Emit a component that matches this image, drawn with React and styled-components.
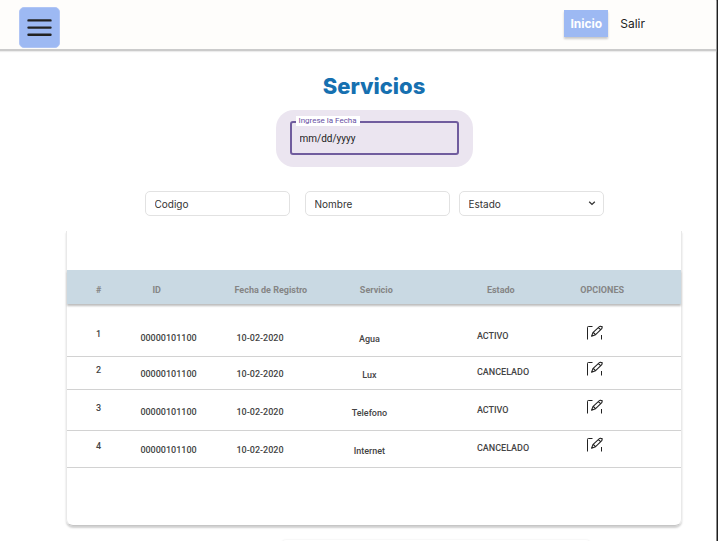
import React from "react";
import styled, { createGlobalStyle } from "styled-components";

const GlobalStyle = createGlobalStyle`
  *, *::before, *::after { box-sizing: border-box; }
  body { margin: 0; background: #fff; font-family: Roboto, "Liberation Sans", sans-serif; color: #333; }
  button, input, select { font: inherit; color: inherit; }
`;

const Page = styled.div`
  display: flex;
  flex-direction: column;
  min-height: 100vh;
  padding-right: 1px;
  border-right: 1px solid #1f1f1f;
  box-shadow: inset -1px 0 0 #8a8a8a;
  overflow: hidden;
`;

const Header = styled.header`
  display: flex;
  align-items: center;
  justify-content: space-between;
  height: 51px;
  padding: 6px 71px 0 19px;
  background: #fefdfb;
  border-bottom: 2px solid #cbcbcb;
  box-shadow: 0 1px 1px #ececec;
`;

const MenuButton = styled.button`
  display: grid;
  place-items: center;
  width: 41px;
  height: 41px;
  padding: 0;
  border: 1px solid #b0c5f5;
  border-radius: 5px;
  background: #9db9f3;
  cursor: pointer;
`;

const Nav = styled.nav`
  display: flex;
  align-items: center;
  gap: 12px;
  height: 41px;
  padding-bottom: 8px;
`;

const NavLink = styled.a`
  display: flex;
  align-items: center;
  justify-content: center;
  height: 27px;
  padding: 0 ${(p) => (p.$active ? 6 : 0)}px;
  font-size: 12px;
  font-family: Inter, sans-serif;
  font-weight: ${(p) => (p.$active ? 700 : 400)};
  color: ${(p) => (p.$active ? "#fff" : "#222")};
  background: ${(p) => (p.$active ? "#9db9f3" : "transparent")};
  box-shadow: ${(p) => (p.$active ? "0 2px 2px #c9c9c9" : "none")};
  text-decoration: none;
`;

const Main = styled.main`
  display: flex;
  flex-direction: column;
  align-items: center;
  padding: 20px 34px 0 66px;
`;

const Title = styled.h1`
  margin: 0;
  font-family: Inter, sans-serif;
  font-size: 22px;
  line-height: 30px;
  font-weight: 800;
  color: #1670b0;
`;

const DatePanel = styled.div`
  width: 197px;
  margin-top: 9px;
  padding: 11px 14px 12px;
  border-radius: 18px;
  background: #ebe5f0;
`;

const DateField = styled.div`
  position: relative;
`;

const DateLabel = styled.label`
  position: absolute;
  top: -5px;
  left: 6px;
  padding: 0 3px;
  font-size: 8px;
  line-height: 10px;
  color: #6750a4;
  background: #fff;
`;

const DateInput = styled.input`
  display: block;
  width: 100%;
  height: 34px;
  padding: 0 8px;
  border: 2px solid #705c9e;
  border-radius: 3px;
  background: transparent;
  font-size: 10px;
  color: #222;
  outline: none;
  &::placeholder { color: #222; opacity: 1; }
`;

const Filters = styled.form`
  display: flex;
  gap: 9px;
  margin-top: 24px;
`;

const FilterPair = styled.div`
  display: flex;
  gap: 15px;
`;

const filterBox = `
  width: 145px;
  height: 25px;
  padding: 0 9px;
  border: 1px solid #e2e2e2;
  border-radius: 5px;
  background: #fff;
  font-family: Inter, sans-serif;
  font-size: 10px;
  color: #333;
`;

const FilterInput = styled.input`
  ${filterBox}
  &::placeholder { color: #333; opacity: 1; }
`;

const SelectWrap = styled.div`
  position: relative;
`;

const FilterSelect = styled.select`
  ${filterBox}
  display: block;
  appearance: none;
`;

const SelectArrow = styled.svg`
  position: absolute;
  right: 8px;
  top: 8px;
  pointer-events: none;
`;

const Card = styled.section`
  width: 100%;
  margin-top: 15px;
  padding: 39px 0 57px;
  border: 1px solid #e9e9e9;
  border-top: 0;
  border-bottom-color: #c6c6c6;
  border-radius: 0 0 7px 7px;
  box-shadow: 0 2px 2px #d0d0d0;
`;

const Table = styled.table`
  width: 100%;
  table-layout: fixed;
  border-collapse: separate;
  border-spacing: 0;
  font-size: 9px;
  line-height: 12px;
`;

const Col = styled.col`
  width: ${(p) => p.$share}%;
`;

const Head = styled.thead`
  background: #c9d9e3;
  box-shadow: 0 2px 2px #bdbdbd;
`;

const HeadCell = styled.th`
  height: 34px;
  padding: 5px 0 0 ${(p) => p.$inset}px;
  text-align: left;
  font-weight: 700;
  color: #858585;
  white-space: nowrap;
`;

const Row = styled.tr`
  height: ${(p) => p.$height}px;
`;

const Cell = styled.td`
  padding: ${(p) => p.$top || 0}px ${(p) => p.$right || 0}px ${(p) => p.$bottom || 0}px ${(p) => p.$inset || 0}px;
  border-bottom: 1px solid #d2d2d2;
  text-align: ${(p) => p.$align || "left"};
  font-weight: 500;
  color: #444;
`;

const EditButton = styled.button`
  display: block;
  padding: 0;
  border: 0;
  background: none;
  cursor: pointer;
`;

const NextPanel = styled.div`
  width: 50%;
  height: 8px;
  margin-top: 14px;
  margin-left: 20%;
  border-radius: 8px;
  box-shadow: 0 0 2px #e4e4e4;
`;

const MenuIcon = () => (
  <svg width="25" height="19" viewBox="0 0 25 19" stroke="#222" strokeWidth="2.4" strokeLinecap="round" aria-hidden="true">
    <path d="M1.5 2.4h22M1.5 9.6h22M1.5 16.7h22" />
  </svg>
);

const EditIcon = () => (
  <svg width="18" height="16" viewBox="0 0 18 16" fill="none" stroke="#222" aria-hidden="true">
    <path d="M6.5 1.5H2.3Q1.5 1.5 1.5 2.3V14.5" strokeWidth="1" />
    <path d="M15.5 10V14.5" strokeWidth="1" />
    <path d="M5.6 11.3l1.3-3.7 6.2-5.8q.8-.7 1.8-.4l1.4.3-.5 1.9-6.2 6.1zM7.4 7.5l2 2.1M12.3 2.5l2.3 2.1" strokeWidth="1.1" strokeLinejoin="round" />
  </svg>
);

const shares = [10, 15, 17, 22, 17, 19];

const headings = [
  { text: "#", inset: 29 },
  { text: "ID", inset: 24 },
  { text: "Fecha de Registro", inset: 14 },
  { text: "Servicio", inset: 35 },
  { text: "Estado", inset: 27 },
  { text: "OPCIONES", inset: 16 },
];

const services = [
  { n: 1, id: "00000101100", date: "10-02-2020", name: "Agua", state: "ACTIVO", height: 53, top: 14 },
  { n: 2, id: "00000101100", date: "10-02-2020", name: "Lux", state: "CANCELADO", height: 33, top: 0 },
  { n: 3, id: "00000101100", date: "10-02-2020", name: "Telefono", state: "ACTIVO", height: 41, top: 2 },
  { n: 4, id: "00000101100", date: "10-02-2020", name: "Internet", state: "CANCELADO", height: 37, top: 0 },
];

export default function App() {
  return (
    <>
      <GlobalStyle />
      <Page>
        <Header>
          <MenuButton type="button" aria-label="Menú">
            <MenuIcon />
          </MenuButton>
          <Nav>
            <NavLink href="#inicio" $active>Inicio</NavLink>
            <NavLink href="#salir">Salir</NavLink>
          </Nav>
        </Header>
        <Main>
          <Title>Servicios</Title>
          <DatePanel>
            <DateField>
              <DateInput id="fecha" type="text" placeholder="mm/dd/yyyy" />
              <DateLabel htmlFor="fecha">Ingrese la Fecha</DateLabel>
            </DateField>
          </DatePanel>
          <Filters>
            <FilterPair>
              <FilterInput type="text" placeholder="Codigo" aria-label="Codigo" />
              <FilterInput type="text" placeholder="Nombre" aria-label="Nombre" />
            </FilterPair>
            <SelectWrap>
              <FilterSelect aria-label="Estado">
                <option>Estado</option>
                <option>ACTIVO</option>
                <option>CANCELADO</option>
              </FilterSelect>
              <SelectArrow width="8" height="8" viewBox="0 0 8 8" fill="none" stroke="#333" strokeWidth="1.3">
                <path d="M1.2 2.7L4 5.4l2.8-2.7" />
              </SelectArrow>
            </SelectWrap>
          </Filters>
          <Card>
            <Table>
              <colgroup>
                {shares.map((share, i) => <Col key={i} $share={share} />)}
              </colgroup>
              <Head>
                <tr>
                  {headings.map((h) => (
                    <HeadCell key={h.text} scope="col" $inset={h.inset}>{h.text}</HeadCell>
                  ))}
                </tr>
              </Head>
              <tbody>
                {services.map((s) => (
                  <Row key={s.n} $height={s.height}>
                    <Cell $inset={29} $top={s.top} $bottom={6}>{s.n}</Cell>
                    <Cell $inset={12} $top={s.top + 2}>{s.id}</Cell>
                    <Cell $inset={16} $top={s.top + 2}>{s.date}</Cell>
                    <Cell $align="center" $right={46} $top={s.top + 4}>{s.name}</Cell>
                    <Cell $inset={17} $top={s.top} $bottom={2}>{s.state}</Cell>
                    <Cell $inset={22} $top={s.top} $bottom={6}>
                      <EditButton type="button" aria-label={`Editar ${s.name}`}>
                        <EditIcon />
                      </EditButton>
                    </Cell>
                  </Row>
                ))}
              </tbody>
            </Table>
          </Card>
          <NextPanel />
        </Main>
      </Page>
    </>
  );
}
